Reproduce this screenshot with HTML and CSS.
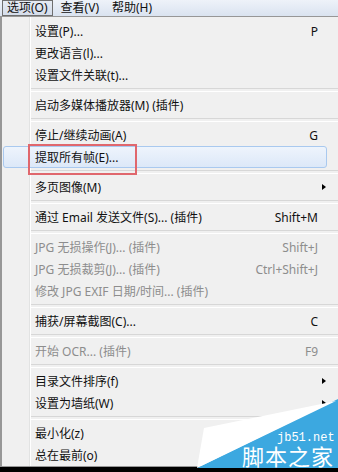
FILE: index.html
```html
<!DOCTYPE html>
<html>
<head>
<meta charset="utf-8">
<link rel="stylesheet" href="styles.css">
</head>
<body>
<div class="screen">
  <div class="menubar">
    <span class="mb-item pressed">选项(O)</span>
    <span class="mb-item">查看(V)</span>
    <span class="mb-item">帮助(H)</span>
  </div>
  <div class="menu">
    <div class="row"><span class="label">设置(P)...</span><span class="key">P</span></div>
    <div class="row"><span class="label">更改语言(l)...</span></div>
    <div class="row"><span class="label">设置文件关联(t)...</span></div>
    <div class="sep"></div>
    <div class="row"><span class="label">启动多媒体播放器(M) (插件)</span></div>
    <div class="sep"></div>
    <div class="row"><span class="label">停止/继续动画(A)</span><span class="key">G</span></div>
    <div class="row hot"><span class="label">提取所有帧(E)...</span></div>
    <div class="sep"></div>
    <div class="row"><span class="label">多页图像(M)</span><span class="arrow"></span></div>
    <div class="sep"></div>
    <div class="row"><span class="label">通过 Email 发送文件(S)... (插件)</span><span class="key">Shift+M</span></div>
    <div class="sep"></div>
    <div class="row dis"><span class="label">JPG 无损操作(J)... (插件)</span><span class="key">Shift+J</span></div>
    <div class="row dis"><span class="label">JPG 无损裁剪(J)... (插件)</span><span class="key">Ctrl+Shift+J</span></div>
    <div class="row dis"><span class="label">修改 JPG EXIF 日期/时间... (插件)</span></div>
    <div class="sep"></div>
    <div class="row"><span class="label">捕获/屏幕截图(C)...</span><span class="key">C</span></div>
    <div class="sep"></div>
    <div class="row dis"><span class="label">开始 OCR... (插件)</span><span class="key">F9</span></div>
    <div class="sep"></div>
    <div class="row"><span class="label">目录文件排序(f)</span><span class="arrow"></span></div>
    <div class="row"><span class="label">设置为墙纸(W)</span><span class="arrow"></span></div>
    <div class="sep"></div>
    <div class="row"><span class="label">最小化(z)</span></div>
    <div class="row"><span class="label">总在最前(o)</span></div>
  </div>
  <div class="taskbar"></div>
  <svg class="watermark" width="338" height="472" viewBox="0 0 338 472">
    <polygon points="197,468 338,399 338,468" fill="#3ca8e0"/>
    <polygon points="197,468 204,428 336,401" fill="#ffffff"/>
    <text x="277" y="441" class="wm-url">jb51.net</text>
    <text x="242" y="465" class="wm-name">脚本之家</text>
  </svg>
</div>
</body>
</html>
```
FILE: styles.css
```css
* {
  box-sizing: border-box;
  margin: 0;
  padding: 0;
}
body {
  margin: 0;
  width: 338px;
  height: 472px;
  overflow: hidden;
  background: #000;
  font-family: "Noto Sans", "Noto Sans CJK SC", sans-serif;
  font-size: 12px;
  color: #000;
}
.screen {
  position: relative;
  width: 338px;
  height: 472px;
  display: flex;
  flex-direction: column;
}
.menubar {
  height: 16px;
  display: flex;
  align-items: stretch;
  gap: 3px;
  padding-left: 2px;
  background: linear-gradient(#eef2f9, #dae3f0);
}
.mb-item {
  display: flex;
  align-items: center;
  padding: 0 4px;
  border: 1px solid transparent;
  line-height: 1;
  color: #111;
}
.pressed {
  border-color: #6f6f6f;
  background: linear-gradient(#e6ebf3, #d5ddea);
}
.menu {
  flex: 1;
  background-color: #f0f0f0;
  background-image: linear-gradient(to right, transparent 27px, #e2e3e3 27px, #e2e3e3 28px, #fff 28px, #fff 29px, transparent 29px);
  border-top: 1px solid #979797;
  border-left: 2px solid #979797;
  border-bottom: 1px solid #979797;
  padding-top: 3px;
  display: flex;
  flex-direction: column;
}
.row {
  height: 22px;
  flex: none;
  display: flex;
  align-items: center;
  padding-left: 33px;
  padding-right: 12px;
  white-space: nowrap;
  color: #111;
}
.label {
  flex: 1;
}
.key {
  margin-right: 8px;
}
.arrow {
  width: 0;
  height: 0;
  border-left: 4px solid #000;
  border-top: 3.5px solid transparent;
  border-bottom: 3.5px solid transparent;
}
.dis {
  color: #8d8d8d;
}
.hot {
  position: relative;
  margin: 0 11px 0 1px;
  padding-left: 31px;
  border: 1px solid #a9c9ef;
  border-radius: 3px;
  background: linear-gradient(#eef4fc, #dce8f8);
}
.hot::after {
  content: "";
  position: absolute;
  left: 24px;
  top: -3px;
  width: 105px;
  height: 27px;
  border: 2px solid #e0676d;
}
.sep {
  height: 8px;
  flex: none;
  margin-left: 29px;
  display: flex;
  align-items: center;
}
.sep::before {
  content: "";
  flex: 1;
  height: 2px;
  border-top: 1px solid #d7d7d7;
  border-bottom: 1px solid #fff;
}
.taskbar {
  height: 5px;
  flex: none;
  background: #000;
}
.watermark {
  position: absolute;
  left: 0;
  top: 0;
  pointer-events: none;
}
.wm-url {
  font-family: "Liberation Mono", monospace;
  font-size: 12px;
  fill: #fff;
}
.wm-name {
  font-family: "Noto Sans CJK SC", sans-serif;
  font-size: 22px;
  letter-spacing: 1px;
  fill: #fff;
}
```
